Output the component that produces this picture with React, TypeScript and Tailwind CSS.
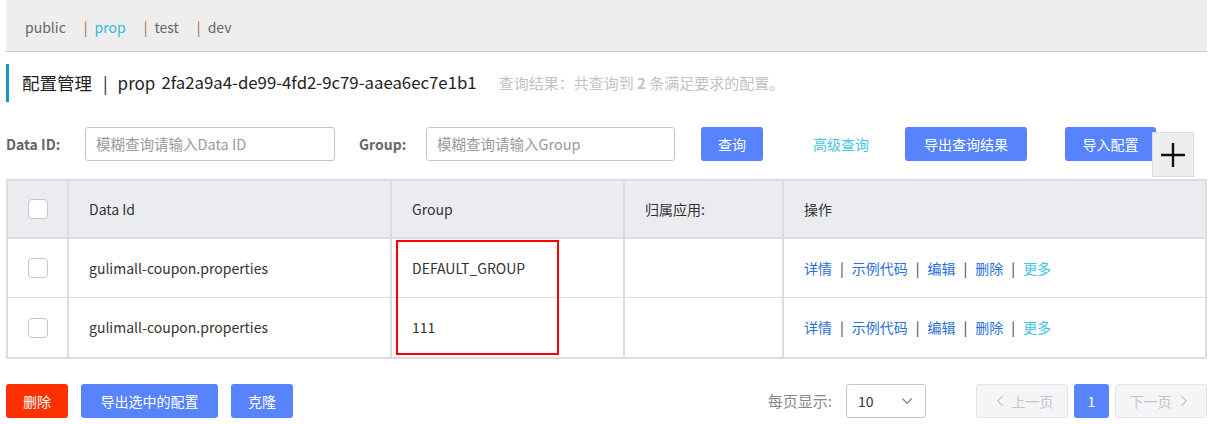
import { ChevronDown, ChevronLeft, ChevronRight } from 'lucide-react';

const font = { fontFamily: '"Noto Sans CJK SC", "Noto Sans", sans-serif' };

const tabs = ['public', 'prop', 'test', 'dev'];

const rows = [
  { id: 'gulimall-coupon.properties', group: 'DEFAULT_GROUP' },
  { id: 'gulimall-coupon.properties', group: '111' },
];

function Checkbox() {
  return <div className="w-[20px] h-[20px] rounded-[4px] border border-[#c5c7cf] bg-white" />;
}

function Actions() {
  const items = ['详情', '示例代码', '编辑', '删除'];
  return (
    <div className="flex items-center text-[14px]">
      {items.map((t) => (
        <span key={t} className="flex items-center">
          <span className="text-[#2a6fd8]">{t}</span>
          <span className="text-[#333] mx-[8px]">|</span>
        </span>
      ))}
      <span className="text-[#3fc6dc]">更多</span>
    </div>
  );
}

export default function App() {
  return (
    <div className="w-[1214px] h-[424px] bg-white overflow-hidden relative" style={font}>
      {/* env tabs */}
      <div className="ml-[6px] w-[1201px] h-[52px] bg-[#eeeeee] border-b border-[#cccccc] flex items-center pt-[3px] pl-[19px] text-[14px]">
        {tabs.map((t, i) => (
          <span key={t} className="flex items-center">
            {i > 0 && <span className="text-[#b06a2a] ml-[18px] mr-[7px]">|</span>}
            <span className={t === 'prop' ? 'text-[#33b9d9]' : 'text-[#666]'}>{t}</span>
          </span>
        ))}
      </div>

      {/* title */}
      <div className="ml-[6px] mt-[12px] h-[38px] flex items-center border-l-[3px] border-[#0c9bcf] pl-[13px] text-[#222] text-[17px]">
        <span className="text-[17.5px]">配置管理</span>
        <span className="ml-[11px]">|</span>
        <span className="ml-[10px]">prop</span>
        <span className="ml-[6px] text-[16.8px]">2fa2a9a4-de99-4fd2-9c79-aaea6ec7e1b1</span>
        <span className="ml-[22px] text-[15px] text-[#c2c2c2]">
          查询结果：共查询到 <b className="font-bold text-[#c2c2c2]">2</b> 条满足要求的配置。
        </span>
      </div>

      {/* search row */}
      <div className="ml-[6px] mt-[25px] h-[34px] flex items-center text-[14px]">
        <span className="font-bold text-[#666] w-[79px]">Data ID:</span>
        <div className="w-[250px] h-[34px] border border-[#c4c6cf] rounded-[3px] flex items-center pl-[10px] text-[14.5px] text-[#9a9a9a]">
          模糊查询请输入Data ID
        </div>
        <span className="font-bold text-[#666] ml-[24px] w-[67px]">Group:</span>
        <div className="w-[249px] h-[34px] border border-[#c4c6cf] rounded-[3px] flex items-center pl-[10px] text-[14.5px] text-[#9a9a9a]">
          模糊查询请输入Group
        </div>
        <button className="ml-[26px] w-[62px] h-[34px] rounded-[3px] bg-[#5784fd] text-white">查询</button>
        <span className="ml-[50px] text-[#3fc6dc]">高级查询</span>
        <button className="ml-[36px] w-[122px] h-[34px] rounded-[3px] bg-[#5784fd] text-white">导出查询结果</button>
        <button className="ml-[38px] w-[91px] h-[34px] rounded-[3px] bg-[#5784fd] text-white">导入配置</button>
      </div>
      <div className="absolute left-[1152px] top-[132px] w-[42px] h-[45px] bg-[#eeeeee] border border-[#dddddd] flex items-center justify-center">
        <svg width="26" height="26" viewBox="0 0 26 26">
          <path d="M13 1v24M1 13h24" stroke="#111" strokeWidth="2.4" />
        </svg>
      </div>

      {/* table */}
      <div className="relative ml-[6px] mt-[18px] w-[1201px] border-2 border-[#dcdde2] text-[14px] text-[#333]">
        <div className="flex h-[58px] bg-[#ebecf0] border-b-2 border-[#dcdde2]">
          <div className="w-[61px] border-r-2 border-[#dcdde2] flex items-center justify-center">
            <Checkbox />
          </div>
          <div className="w-[323px] border-r-2 border-[#dcdde2] flex items-center pl-[20px]">Data Id</div>
          <div className="w-[233px] border-r-2 border-[#dcdde2] flex items-center pl-[20px]">Group</div>
          <div className="w-[159px] border-r-2 border-[#dcdde2] flex items-center pl-[20px]">归属应用:</div>
          <div className="flex-1 flex items-center pl-[20px]">操作</div>
        </div>
        {rows.map((r, i) => (
          <div key={i} className={`flex h-[59px] ${i === 0 ? 'border-b border-[#dcdde2]' : ''}`}>
            <div className="w-[61px] border-r-2 border-[#dcdde2] flex items-center justify-center">
              <Checkbox />
            </div>
            <div className="w-[323px] border-r-2 border-[#dcdde2] flex items-center pl-[20px]">{r.id}</div>
            <div className="w-[233px] border-r-2 border-[#dcdde2] flex items-center pl-[20px]">{r.group}</div>
            <div className="w-[159px] border-r-2 border-[#dcdde2]" />
            <div className="flex-1 flex items-center pl-[20px]">
              <Actions />
            </div>
          </div>
        ))}
        <div className="absolute left-[388px] top-[59px] w-[163px] h-[115px] border-2 border-[#ff0000]" />
      </div>

      {/* footer */}
      <div className="ml-[6px] mt-[25px] w-[1201px] h-[34px] flex items-center text-[14px]">
        <button className="w-[62px] h-[34px] rounded-[3px] bg-[#ff3000] text-white">删除</button>
        <button className="ml-[13px] w-[137px] h-[34px] rounded-[3px] bg-[#5784fd] text-white">导出选中的配置</button>
        <button className="ml-[13px] w-[62px] h-[34px] rounded-[3px] bg-[#5784fd] text-white">克隆</button>
        <div className="flex-1" />
        <span className="text-[15px] text-[#888]">每页显示:</span>
        <div className="ml-[14px] w-[80px] h-[34px] border border-[#c4c6cf] rounded-[3px] flex items-center justify-between pl-[11px] pr-[9px]">
          <span className="text-[#333]">10</span>
          <ChevronDown className="w-[18px] h-[18px] text-[#888]" strokeWidth={1.5} />
        </div>
        <div className="ml-[50px] w-[92px] h-[34px] rounded-[3px] bg-[#f4f5f7] border border-[#e4e5e8] flex items-center justify-center gap-[3px] text-[#c3c5cc]">
          <ChevronLeft className="w-[18px] h-[18px]" strokeWidth={1.5} />
          上一页
        </div>
        <div className="ml-[6px] w-[35px] h-[34px] rounded-[3px] bg-[#5784fd] text-white flex items-center justify-center">1</div>
        <div className="ml-[6px] w-[92px] h-[34px] rounded-[3px] bg-[#f4f5f7] border border-[#e4e5e8] flex items-center justify-center gap-[3px] text-[#c3c5cc]">
          下一页
          <ChevronRight className="w-[18px] h-[18px]" strokeWidth={1.5} />
        </div>
      </div>
    </div>
  );
}
